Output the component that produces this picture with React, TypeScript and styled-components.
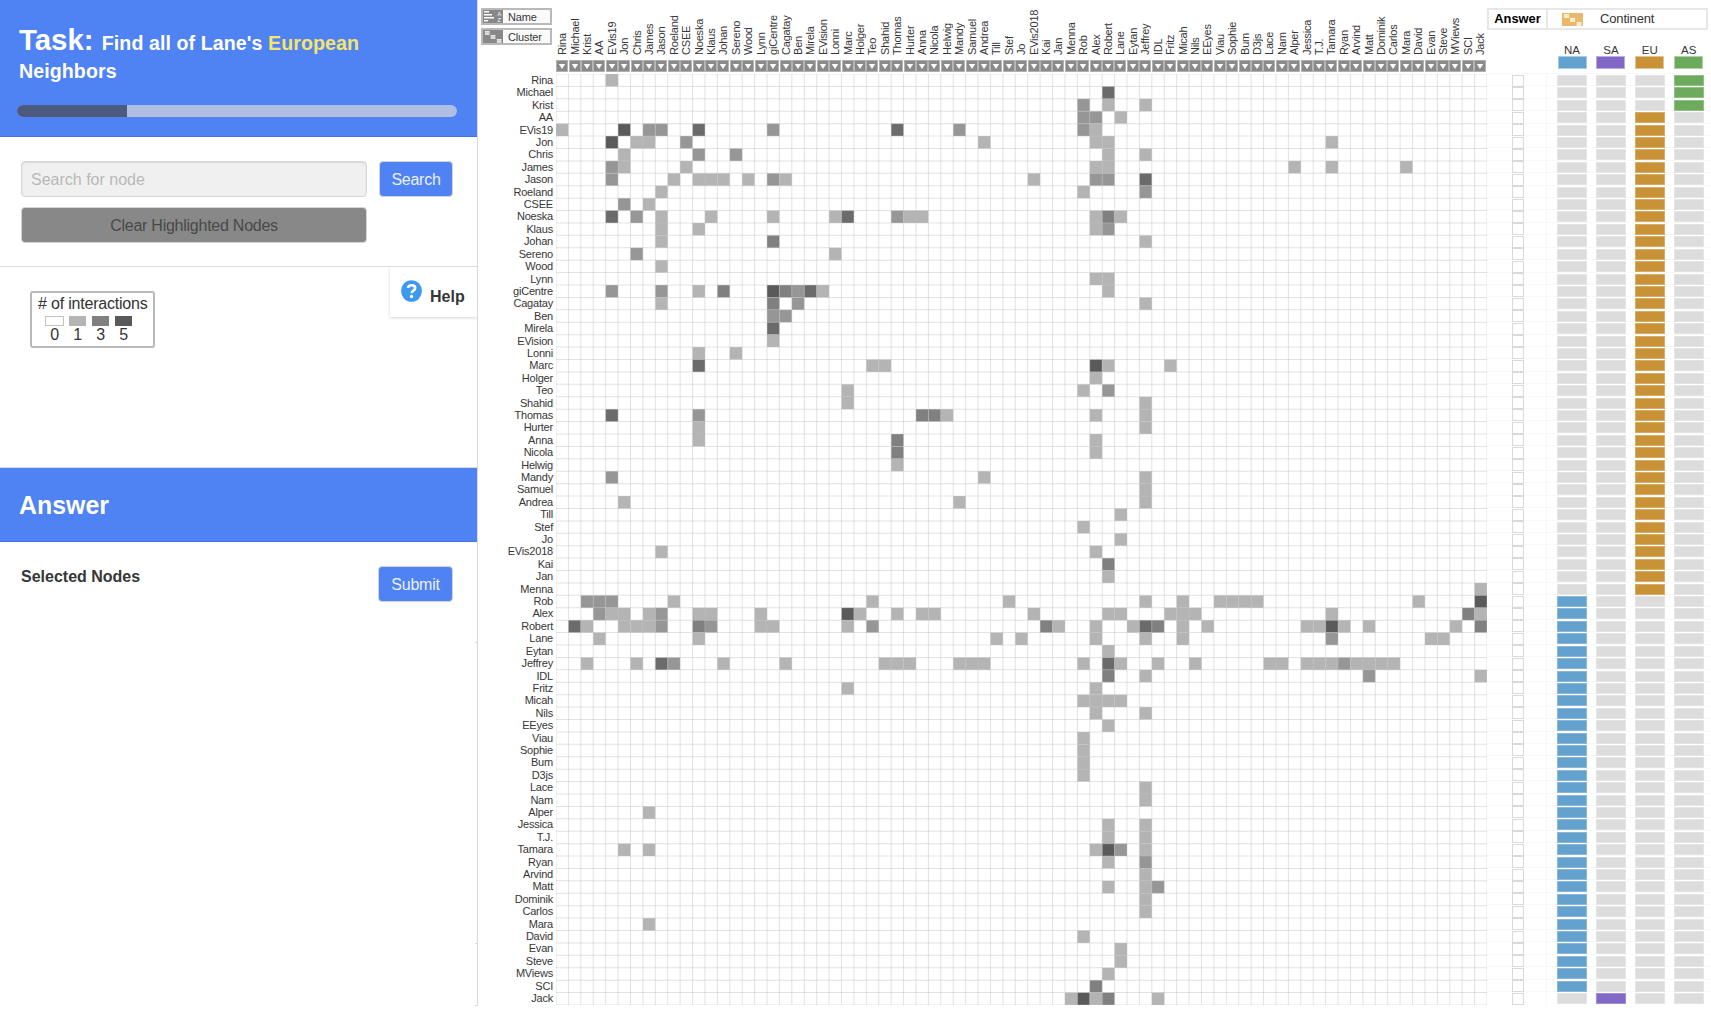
import React from 'react';
import styled, { createGlobalStyle } from 'styled-components';

const PITCH = 12.411;
const SHADES = ['#fff', '#b4b4b4', '#969696', '#808080', '#6b6b6b', '#5a5a5a'];
const BLUE = '#4f82f3';

const NAMES = (
  'Rina Michael Krist AA EVis19 Jon Chris James Jason Roeland CSEE Noeska Klaus Johan Sereno Wood Lynn ' +
  'giCentre Cagatay Ben Mirela EVision Lonni Marc Holger Teo Shahid Thomas Hurter Anna Nicola Helwig Mandy ' +
  'Samuel Andrea Till Stef Jo EVis2018 Kai Jan Menna Rob Alex Robert Lane Eytan Jeffrey IDL Fritz Micah Nils ' +
  'EEyes Viau Sophie Bum D3js Lace Nam Alper Jessica T.J. Tamara Ryan Arvind Matt Dominik Carlos Mara David ' +
  'Evan Steve MViews SCI Jack'
).split(' ');

/* Undirected edges: each source lists "target:weight". */
const LINKS: Record<string, string> = {
  Rina: 'EVis19:1',
  Michael: 'Robert:4',
  Krist: 'Rob:2 Robert:1 Jeffrey:1',
  AA: 'Rob:2 Alex:2 Lane:1',
  EVis19: 'Jon:5 James:2 Jason:2 Noeska:4 giCentre:2 Thomas:4 Mandy:2 Rob:2 Alex:1',
  Jon: 'Chris:1 James:1 CSEE:2 Andrea:1 Alex:1 Robert:1 Tamara:1',
  Chris: 'Noeska:2 Sereno:2 Robert:1 Jeffrey:1',
  James: 'CSEE:1 Alex:1 Robert:1 Alper:1 Tamara:1 Mara:1',
  Jason:
    'Roeland:1 Noeska:1 Klaus:1 Johan:1 Wood:1 giCentre:2 Cagatay:1 EVis2018:1 Alex:2 Robert:2 Jeffrey:4',
  Roeland: 'Rob:1 Jeffrey:2',
  Noeska: 'Klaus:1 giCentre:1 Lonni:1 Marc:4 Thomas:2 Hurter:1 Anna:1 Alex:1 Robert:3 Lane:1',
  Klaus: 'Alex:1 Robert:2',
  Johan: 'giCentre:3 Jeffrey:1',
  Sereno: 'Lonni:1',
  Lynn: 'Alex:1 Robert:1',
  giCentre: 'giCentre:5 Cagatay:3 Ben:2 Mirela:4 EVision:1 Robert:1',
  Cagatay: 'Ben:2 Jeffrey:1',
  Marc: 'Teo:1 Shahid:1 Alex:5 Robert:1 Fritz:1',
  Holger: 'Alex:1',
  Teo: 'Rob:1 Robert:2',
  Shahid: 'Jeffrey:1',
  Thomas: 'Anna:3 Nicola:3 Helwig:1 Alex:1 Jeffrey:1',
  Hurter: 'Jeffrey:1',
  Anna: 'Alex:1',
  Nicola: 'Alex:1',
  Mandy: 'Andrea:1 Jeffrey:1',
  Samuel: 'Jeffrey:1',
  Andrea: 'Jeffrey:1',
  Till: 'Lane:1',
  Stef: 'Rob:1',
  Jo: 'Lane:1',
  EVis2018: 'Alex:1',
  Kai: 'Robert:3',
  Jan: 'Robert:1',
  Menna: 'Jack:1',
  Rob: 'Jeffrey:1 Micah:1 Viau:1 Sophie:1 Bum:1 D3js:1 David:1 Jack:5',
  Alex: 'Robert:1 Lane:1 Fritz:1 Micah:1 Nils:1 Tamara:1 SCI:3 Jack:1',
  Robert:
    'Eytan:1 Jeffrey:4 IDL:3 Micah:1 EEyes:1 Jessica:1 T.J.:1 Tamara:5 Ryan:1 Matt:1 MViews:1 Jack:3',
  Lane: 'Jeffrey:1 Micah:1 Tamara:2 Evan:1 Steve:1',
  Jeffrey:
    'IDL:1 Nils:1 Lace:1 Nam:1 Jessica:1 T.J.:1 Tamara:1 Ryan:2 Arvind:1 Matt:1 Dominik:1 Carlos:1',
  IDL: 'Matt:2 Jack:1',
};

type Cell = { row: number; col: number; weight: number };

const CELLS: Cell[] = Object.entries(LINKS).flatMap(([from, list]) =>
  list.split(' ').flatMap((entry) => {
    const [to, w] = entry.split(':');
    const row = NAMES.indexOf(from);
    const col = NAMES.indexOf(to);
    const weight = Number(w);
    return row === col ? [{ row, col, weight }] : [{ row, col, weight }, { row: col, col: row, weight }];
  }),
);

const CONTINENTS = [
  { id: 'NA', color: '#63a1cf' },
  { id: 'SA', color: '#8067c8' },
  { id: 'EU', color: '#c99236' },
  { id: 'AS', color: '#6cab5b' },
];

const continentOf = (i: number) => (i < 3 ? 'AS' : i < 42 ? 'EU' : i < 74 ? 'NA' : 'SA');

const Global = createGlobalStyle`
  * { box-sizing: border-box; }
  body { margin: 0; background: #fff; font-family: "Liberation Sans", Arial, sans-serif; color: #363636; }
`;

const Page = styled.div`
  display: flex;
  width: 1711px;
  height: 1013px;
  overflow: hidden;
`;

const Sidebar = styled.aside`
  width: 478px;
  height: 1006px;
  flex: none;
  display: flex;
  flex-direction: column;
  border-right: 1px solid #d9d9d9;
`;

const TaskHeader = styled.header`
  height: 137px;
  padding: 21px 20px 0 19px;
  background: ${BLUE};
  border-bottom: 1px solid #4573da;
  color: #fff;
`;

const TaskTitle = styled.h1`
  margin: 0;
  height: 84px;
  font-size: 29.4px;
  line-height: 28px;
  font-weight: 700;
  padding-top: 5px;
`;

const TaskText = styled.span`
  font-size: 19.6px;
  line-height: 18px;
  letter-spacing: 0.08px;
`;

const Emphasis = styled.span`
  color: #f5e56b;
`;

const Progress = styled.div`
  width: 440px;
  height: 12px;
  margin-left: -2px;
  border-radius: 6px;
  overflow: hidden;
  background: #b0bee1;
`;

const ProgressFill = styled.div`
  width: 110px;
  height: 100%;
  background: #4d5a7f;
`;

const SearchPanel = styled.section`
  height: 130px;
  padding: 24px 24px 0 21px;
  display: grid;
  grid-template-columns: 346px 74px;
  grid-template-rows: 36px 36px;
  column-gap: 12px;
  row-gap: 10px;
  border-bottom: 1px solid #dbdbdb;
`;

const SearchInput = styled.input`
  height: 36px;
  padding: 1px 9px 0;
  border: 1px solid #d6d6d6;
  border-radius: 4px;
  background: #f0f0f0;
  box-shadow: inset 0 1px 2px rgba(10, 10, 10, 0.1);
  font: 16px "Liberation Sans", Arial, sans-serif;
  &::placeholder { color: #b8b8b8; opacity: 1; }
`;

const Button = styled.button<{ $muted?: boolean }>`
  height: 36px;
  padding: 1px 0 0;
  border: 1px solid #d4d4d4;
  border-radius: 4px;
  background: ${(p) => (p.$muted ? '#888' : BLUE)};
  color: ${(p) => (p.$muted ? '#484848' : '#eaf0fd')};
  font: 16px "Liberation Sans", Arial, sans-serif;
  letter-spacing: -0.25px;
`;

const LegendPanel = styled.section`
  height: 201px;
  display: flex;
  justify-content: space-between;
  align-items: flex-start;
  border-bottom: 1px solid #dbdbdb;
`;

const Legend = styled.div`
  width: 125px;
  height: 57px;
  margin: 24px 0 0 30px;
  padding: 2px 0 0 6px;
  border: 2px solid #b9b9b9;
  border-radius: 3px;
  color: #333;
  font-size: 16px;
  line-height: 18px;
  letter-spacing: -0.2px;
  white-space: nowrap;
`;

const LegendScale = styled.div`
  display: flex;
  margin-left: 5px;
  padding-top: 3px;
`;

const LegendStep = styled.div`
  width: 23px;
  display: flex;
  flex-direction: column;
  align-items: center;
`;

const LegendSwatch = styled.div<{ $color: string; $empty?: boolean }>`
  width: ${(p) => (p.$empty ? 19 : 17)}px;
  height: 10px;
  background: ${(p) => p.$color};
  border: ${(p) => (p.$empty ? '1px solid #c4c4c4' : '0')};
`;

const HelpTab = styled.div`
  width: 87px;
  height: 50px;
  padding: 13px 0 0 11px;
  display: flex;
  gap: 8px;
  box-shadow: 0 1px 3px rgba(0, 0, 0, 0.18);
  clip-path: inset(0 0 -4px -4px);
  font-size: 16px;
  font-weight: 700;
`;

const HelpLabel = styled.span`
  padding-top: 8px;
  line-height: 18px;
`;

const AnswerHeader = styled.h2`
  margin: 0;
  height: 74px;
  padding: 0 19px 0;
  background: ${BLUE};
  border-bottom: 1px solid #4573da;
  color: #fff;
  font-size: 24.9px;
  line-height: 75px;
`;

const AnswerPanel = styled.section`
  height: 100px;
  padding: 24px 24px 0 21px;
  display: flex;
  justify-content: space-between;
  font-size: 16px;
  font-weight: 700;
`;

const SelectedTitle = styled.div`
  padding-top: 1px;
  line-height: 20px;
`;

const SubmitButton = styled(Button)`
  width: 75px;
`;

const EdgeTick = styled.div<{ $gap: number }>`
  width: 2px;
  height: 1px;
  margin-left: auto;
  margin-bottom: ${(p) => p.$gap}px;
  background: #d9d9d9;
  flex: none;
`;

const View = styled.main`
  flex: 1;
  display: grid;
  grid-template-columns: 78px 931px 224px;
  grid-template-rows: 74px 931px;
`;

const SortButtons = styled.div`
  padding: 8px 4px 0 3px;
  display: flex;
  flex-direction: column;
  gap: 3px;
`;

const SortButton = styled.div`
  height: 17px;
  display: flex;
  align-items: center;
  gap: 5px;
  border: 2px solid #b9b9b9;
  background: #fafafa;
  font-size: 11px;
  line-height: 13px;
  letter-spacing: -0.15px;
`;

const SortText = styled.span`
  padding-top: 1px;
`;

const ColumnHeads = styled.div`
  display: flex;
`;

const ColumnHead = styled.div`
  flex: 1 1 0;
  min-width: 0;
  display: flex;
  flex-direction: column;
  align-items: center;
`;

const ColumnLabel = styled.div`
  height: 55px;
  margin-bottom: 5px;
  writing-mode: vertical-rl;
  transform: rotate(180deg);
  font-size: 11px;
  line-height: 12px;
  letter-spacing: -0.2px;
  white-space: nowrap;
`;

const RowLabels = styled.div`
  padding-right: 3px;
  text-align: right;
  font-size: 11px;
  letter-spacing: -0.2px;
`;

const RowLabel = styled.div`
  height: ${PITCH}px;
  line-height: ${PITCH}px;
`;

const AttributeHead = styled.div`
  display: grid;
  grid-template-columns: 60px 164px;
  grid-template-rows: 30px 44px;
`;

const AnswerTitle = styled.div`
  margin-top: 8px;
  border: 2px solid #e7e7e7;
  border-right-width: 1px;
  color: #000;
  font-size: 12.9px;
  font-weight: 700;
  line-height: 18px;
  text-align: center;
`;

const ContinentTitle = styled.div`
  margin: 8px 3px 0 0;
  display: flex;
  align-items: center;
  gap: 17px;
  padding-left: 14px;
  border: 2px solid #e7e7e7;
  border-left-width: 1px;
  color: #333;
  font-size: 13px;
  letter-spacing: -0.15px;
  line-height: 18px;
`;

const CategoryHeads = styled.div`
  grid-column: 2;
  display: grid;
  grid-template-columns: repeat(4, 38.9px);
  padding: 15px 0 0 5.6px;
`;

const CategoryHead = styled.div`
  display: flex;
  flex-direction: column;
  align-items: center;
  font-size: 11.5px;
  line-height: 11px;
`;

const CategorySwatch = styled.div<{ $color: string }>`
  width: 29px;
  height: 13px;
  background: ${(p) => p.$color};
  border: 1px solid rgba(255, 255, 255, 0.45);
`;

const AttributeRows = styled.div`
  width: 224px;
`;

const AttributeRow = styled.div`
  height: ${PITCH}px;
  display: grid;
  grid-template-columns: 60px 164px;
  box-shadow: 0 -1px 0 #f8f8f8;
`;

const CheckCell = styled.div`
  padding: 0.5px 0 0 25px;
  border-right: 1px solid #f8f8f8;
`;

const CheckBox = styled.div`
  width: 12px;
  height: 12px;
  border: 1px solid #d9d9d9;
`;

const CategoryCells = styled.div`
  display: grid;
  grid-template-columns: repeat(4, 38.9px);
  justify-items: center;
  padding: 1px 0 0 6px;
`;

const CategoryBar = styled.div<{ $color: string }>`
  width: 30px;
  height: 11px;
  background: ${(p) => p.$color};
  border: 1px solid rgba(255, 255, 255, 0.25);
`;

const ClusterGlyph = ({ width, height, color }: { width: number; height: number; color: string }) => (
  <svg width={width} height={height} viewBox="0 0 21 13" preserveAspectRatio="none">
    <rect width="21" height="13" fill={color} />
    <g fill="#fff">
      <rect x="2" y="1.2" width="5" height="1.4" />
      <rect x="2" y="3.3" width="5" height="1.4" />
      <rect x="8" y="5.2" width="5" height="1.4" />
      <rect x="8" y="7.3" width="5" height="1.4" />
      <rect x="14.5" y="9.2" width="5" height="1.4" />
      <rect x="14.5" y="11.2" width="5" height="1.4" />
    </g>
  </svg>
);

const NameGlyph = () => (
  <svg width="20" height="13" viewBox="0 0 20 13">
    <rect width="20" height="13" fill="#888" />
    <g fill="#fff">
      <rect x="1" y="1" width="5" height="1.5" />
      <rect x="1" y="4" width="8" height="1.5" />
      <rect x="1" y="7" width="10" height="1.5" />
      <rect x="1" y="10" width="4" height="1.5" />
    </g>
    <text x="14.5" y="5.8" fontSize="5.5" fill="#fff">A</text>
    <text x="14.5" y="12" fontSize="5.5" fill="#fff">Z</text>
  </svg>
);

const SortArrow = () => (
  <svg width="12" height="12" viewBox="0 0 12 12">
    <rect x="0.5" y="0.3" width="11" height="11.4" fill="#8a8a8a" stroke="#b0b0b0" strokeWidth="0.8" />
    <path d="M2.8 4h6.4L6 9z" fill="#fff" />
  </svg>
);

const HelpIcon = () => (
  <svg width="21" height="22" viewBox="0 0 21 22">
    <ellipse cx="10.5" cy="11" rx="10.4" ry="10.8" fill="#3b99ee" />
    <path
      d="M6.8 7.8C7.4 6 8.700 5.200 10.600 5.200C12.800 5.200 14.200 6.400 14.200 8.100C14.200 10.700 10.600 10.600 10.600 13.200"
      fill="none"
      stroke="#fff"
      strokeWidth="2.6"
    />
    <circle cx="10.6" cy="16.5" r="1.7" fill="#fff" />
  </svg>
);

const Matrix = () => {
  const size = PITCH * NAMES.length;
  const lines = Array.from({ length: NAMES.length + 1 }, (_, i) => i * PITCH);
  return (
    <svg width="931" height="931" viewBox={`0 0 ${size} ${size}`}>
      {CELLS.map((c) => (
        <rect
          key={`${c.row}-${c.col}`}
          x={c.col * PITCH}
          y={c.row * PITCH}
          width={PITCH}
          height={PITCH}
          fill={SHADES[c.weight]}
        />
      ))}
      <g stroke="#bebebe" strokeOpacity="0.45">
        {lines.map((p) => (
          <g key={p}>
            <line x1={p} x2={p} y1="0" y2={size} />
            <line y1={p} y2={p} x1="0" x2={size} />
          </g>
        ))}
      </g>
    </svg>
  );
};

export default function App() {
  return (
    <Page>
      <Global />
      <Sidebar>
        <TaskHeader>
          <TaskTitle>
            Task:{' '}
            <TaskText>
              Find all of Lane's <Emphasis>European</Emphasis> Neighbors
            </TaskText>
          </TaskTitle>
          <Progress>
            <ProgressFill />
          </Progress>
        </TaskHeader>
        <SearchPanel>
          <SearchInput placeholder="Search for node" />
          <Button>Search</Button>
          <Button $muted>Clear Highlighted Nodes</Button>
        </SearchPanel>
        <LegendPanel>
          <Legend>
            # of interactions
            <LegendScale>
              {[0, 1, 3, 5].map((n) => (
                <LegendStep key={n}>
                  <LegendSwatch $color={SHADES[n]} $empty={n === 0} />
                  {n}
                </LegendStep>
              ))}
            </LegendScale>
          </Legend>
          <HelpTab>
            <HelpIcon />
            <HelpLabel>Help</HelpLabel>
          </HelpTab>
        </LegendPanel>
        <AnswerHeader>Answer</AnswerHeader>
        <AnswerPanel>
          <SelectedTitle>Selected Nodes</SelectedTitle>
          <SubmitButton>Submit</SubmitButton>
        </AnswerPanel>
        <EdgeTick $gap={300} />
        <EdgeTick $gap={61} />
        <EdgeTick $gap={0} />
      </Sidebar>
      <View>
        <SortButtons>
          <SortButton>
            <NameGlyph />
            <SortText>Name</SortText>
          </SortButton>
          <SortButton>
            <ClusterGlyph width={20} height={13} color="#888" />
            <SortText>Cluster</SortText>
          </SortButton>
        </SortButtons>
        <ColumnHeads>
          {NAMES.map((n) => (
            <ColumnHead key={n}>
              <ColumnLabel>{n}</ColumnLabel>
              <SortArrow />
            </ColumnHead>
          ))}
        </ColumnHeads>
        <AttributeHead>
          <AnswerTitle>Answer</AnswerTitle>
          <ContinentTitle>
            <ClusterGlyph width={21} height={13} color="#e8b96b" />
            Continent
          </ContinentTitle>
          <CategoryHeads>
            {CONTINENTS.map((c) => (
              <CategoryHead key={c.id}>
                {c.id}
                <CategorySwatch $color={c.color} />
              </CategoryHead>
            ))}
          </CategoryHeads>
        </AttributeHead>
        <RowLabels>
          {NAMES.map((n) => (
            <RowLabel key={n}>{n}</RowLabel>
          ))}
        </RowLabels>
        <Matrix />
        <AttributeRows>
          {NAMES.map((n, i) => (
            <AttributeRow key={n}>
              <CheckCell>
                <CheckBox />
              </CheckCell>
              <CategoryCells>
                {CONTINENTS.map((c) => (
                  <CategoryBar key={c.id} $color={continentOf(i) === c.id ? c.color : '#dcdcdc'} />
                ))}
              </CategoryCells>
            </AttributeRow>
          ))}
        </AttributeRows>
      </View>
    </Page>
  );
}
